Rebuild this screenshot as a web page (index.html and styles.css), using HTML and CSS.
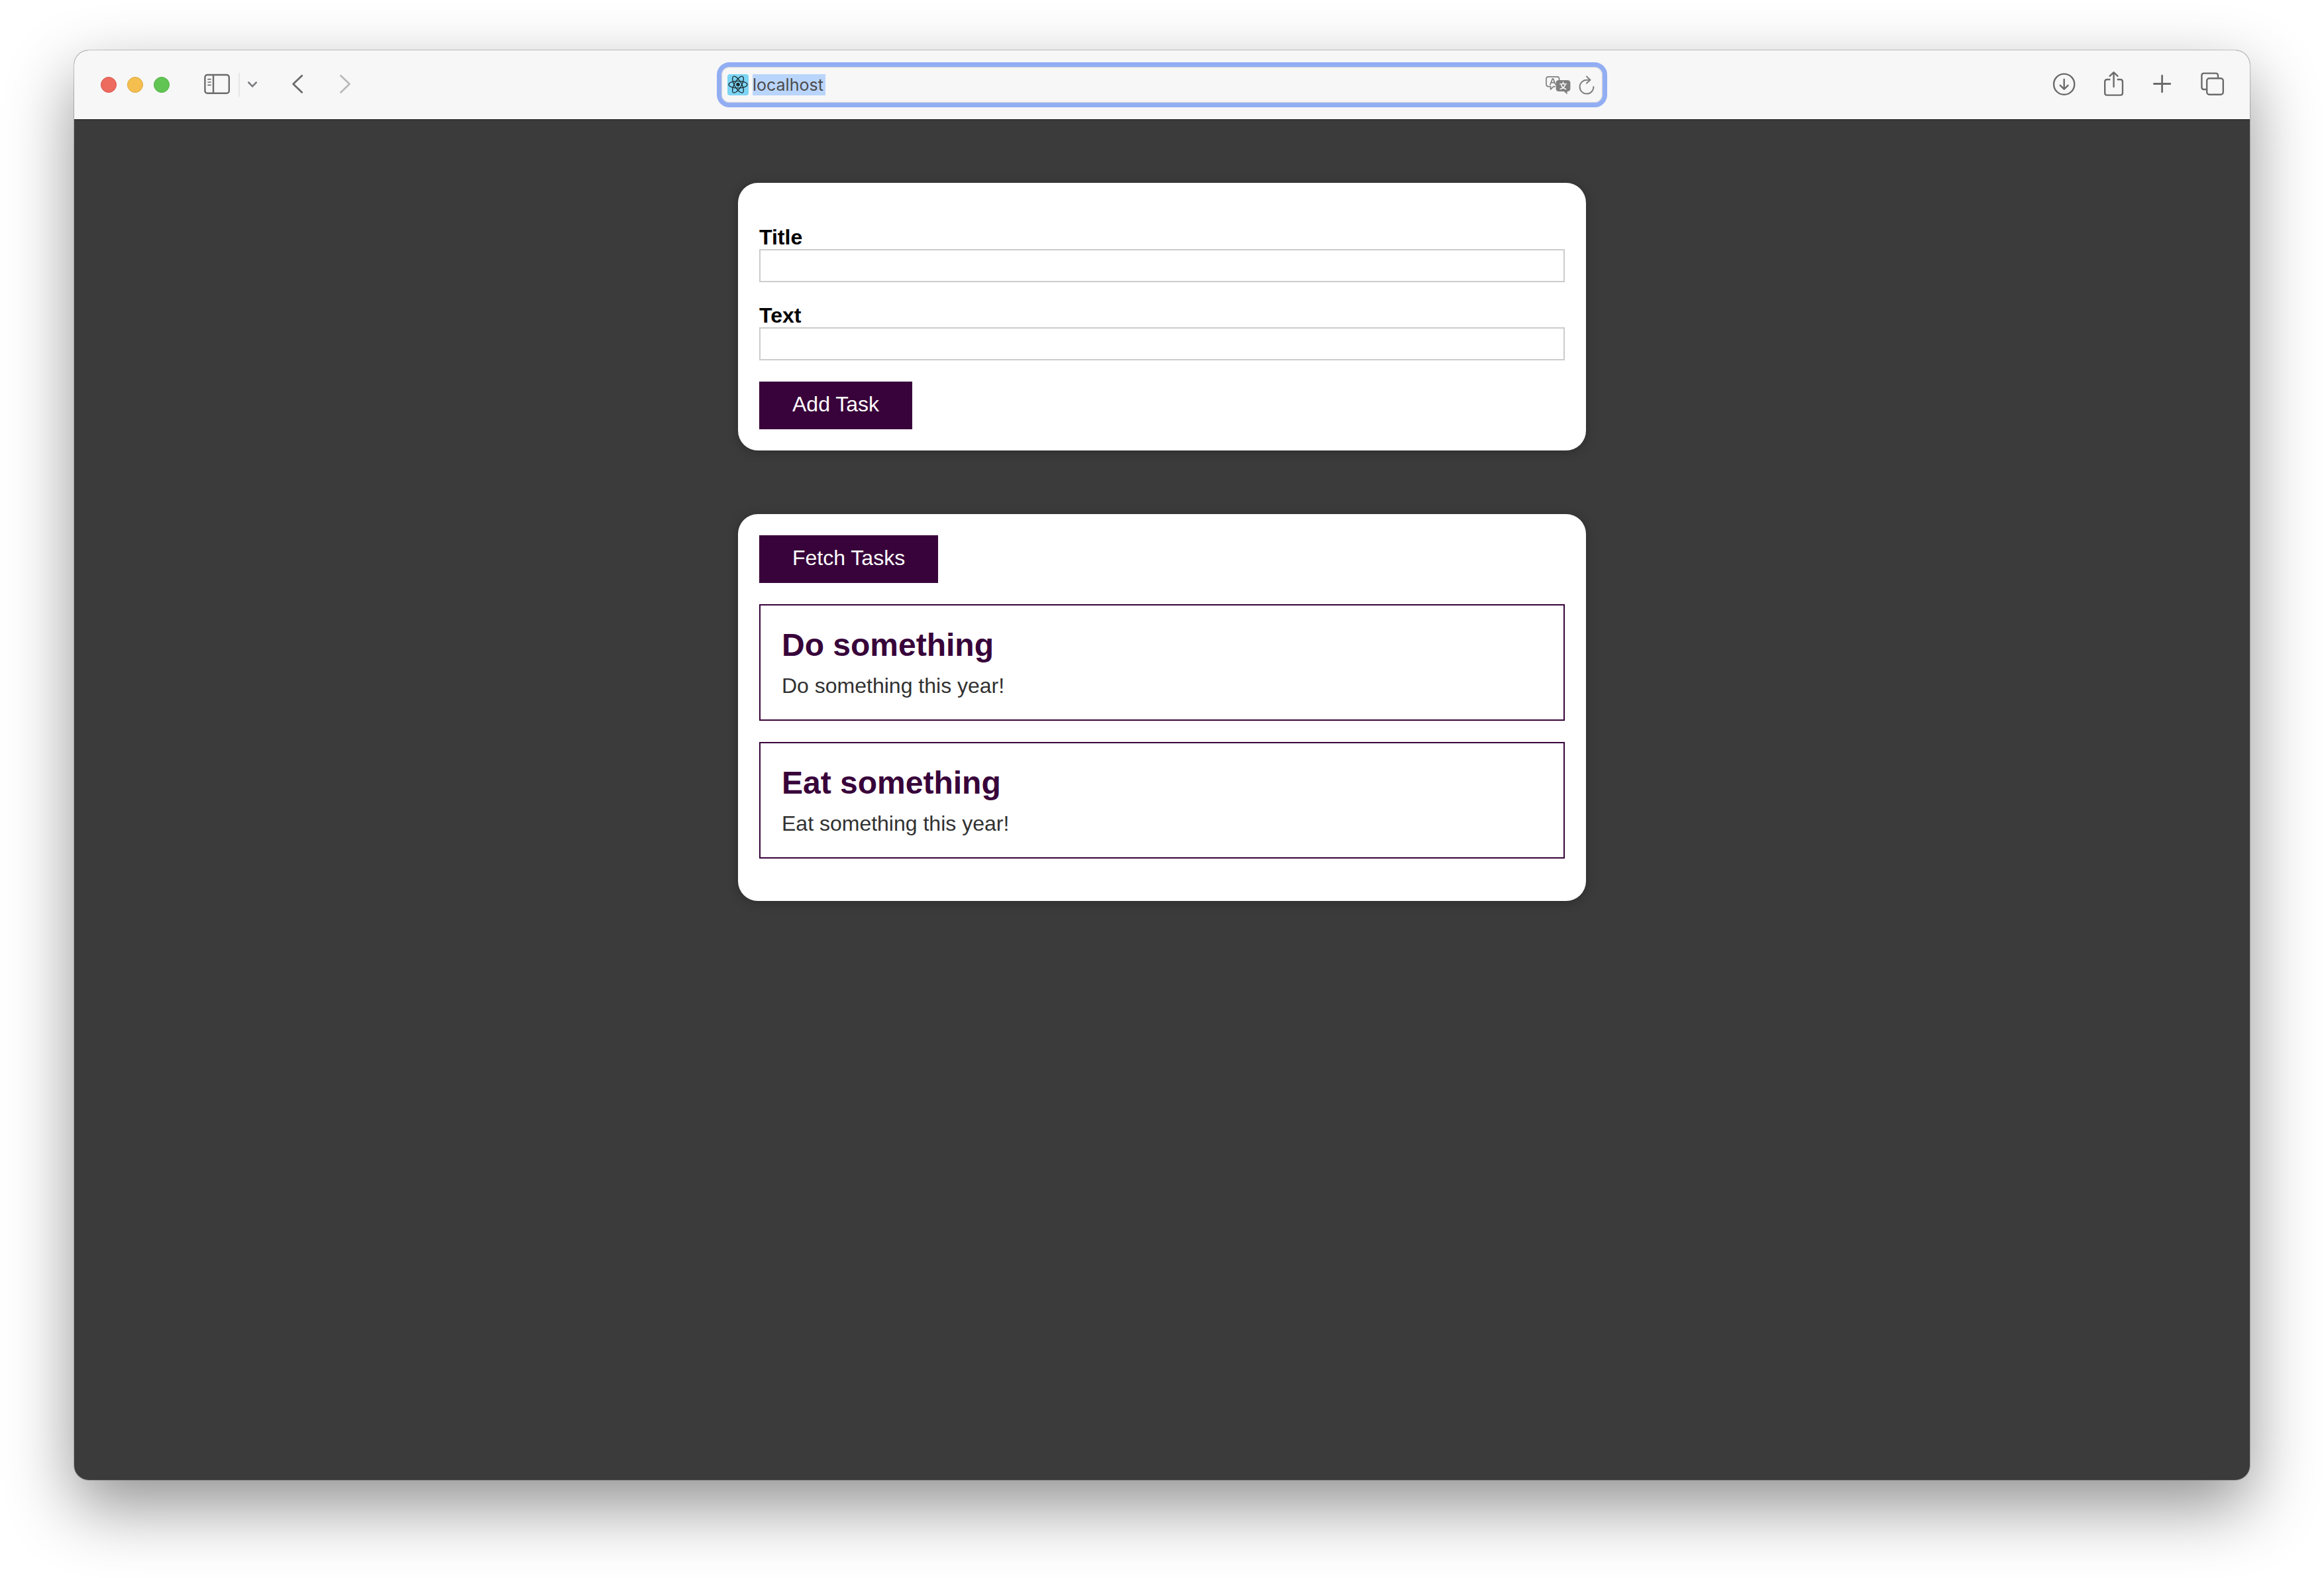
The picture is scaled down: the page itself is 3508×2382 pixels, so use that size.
FILE: index.html
```html
<!DOCTYPE html>
<html lang="en">
<head>
  <meta charset="utf-8">
  <meta name="viewport" content="width=device-width, initial-scale=1">
  <title>Tasks</title>
  <link rel="stylesheet" href="styles.css">
</head>
<body>
  <div class="window">
    <header class="toolbar">
      <div class="toolbar-start">
        <div class="lights">
          <button class="light light-close" type="button" aria-label="Close"></button>
          <button class="light light-minimize" type="button" aria-label="Minimize"></button>
          <button class="light light-zoom" type="button" aria-label="Zoom"></button>
        </div>
        <div class="sidebar-tools">
          <button class="icon-button" type="button" aria-label="Show sidebar">
            <svg width="40" height="44" viewBox="0 0 40 44" fill="none" stroke="#6b6b6b" stroke-width="2.4" stroke-linecap="round">
              <rect x="1.4" y="7" width="36.4" height="27.8" rx="3.6"/>
              <path d="M14 7v27.8" stroke-linecap="butt"/>
              <path d="M6 13.7h4M6 18h4M6 22.4h4" stroke-width="1.7"/>
            </svg>
          </button>
          <span class="divider"></span>
          <button class="icon-button" type="button" aria-label="Tab groups">
            <svg width="14" height="44" viewBox="1 0 14 44" fill="none" stroke="#7d7d82" stroke-width="2.8" stroke-linecap="round" stroke-linejoin="round">
              <path d="M2.4 18.6l5.6 5.8 5.6-5.8"/>
            </svg>
          </button>
        </div>
        <div class="history">
          <button class="icon-button" type="button" aria-label="Back">
            <svg width="18" height="44" viewBox="0 0 18 44" fill="none" stroke="#6b6b6b" stroke-width="2.8" stroke-linecap="round" stroke-linejoin="round">
              <path d="M15.8 8.2L2.6 20.8l13.2 12.6"/>
            </svg>
          </button>
          <button class="icon-button" type="button" aria-label="Forward">
            <svg width="18" height="44" viewBox="0 0 18 44" fill="none" stroke="#b9b9b9" stroke-width="2.8" stroke-linecap="round" stroke-linejoin="round">
              <path d="M2.4 8.2l13.2 12.6L2.4 33.4"/>
            </svg>
          </button>
        </div>
      </div>

      <div class="address">
        <svg class="favicon" width="32" height="32" viewBox="0 0 32 32" fill="none" stroke="#1c2a30" stroke-width="1.3" aria-hidden="true">
          <rect width="32" height="32" rx="4" fill="#7dd5f5" stroke="none"/>
          <ellipse cx="16" cy="15.6" rx="14" ry="5.3"/>
          <ellipse cx="16" cy="15.6" rx="14" ry="5.3" transform="rotate(60 16 15.6)"/>
          <ellipse cx="16" cy="15.6" rx="14" ry="5.3" transform="rotate(120 16 15.6)"/>
          <circle cx="16" cy="15.6" r="2.8" fill="#1c2a30" stroke="none"/>
        </svg>
        <input class="address-input" type="text" value="localhost" aria-label="Address">
        <div class="address-tools">
          <button class="icon-button" type="button" aria-label="Translate">
            <svg width="40" height="32" viewBox="0 0 40 32" fill="none" stroke="#7f7f7f" stroke-width="1.7" stroke-linecap="round" stroke-linejoin="round">
              <path d="M15 18.600h-2L8.600 23v-4.400H5.600q-3.600 0-3.600-3.600V7.400q0-3.600 3.600-3.600h12.400q3.600 0 3.600 3.600v1"/>
              <path d="M8 15.600l3.500-8.800h1l3.500 8.800M9.400 12.600h5.200"/>
              <path d="M21 9h13q4.400 0 4.400 4.400v8.200q0 4.400-4.400 4.400h-.4v4.400L28.800 26H21q-4.400 0-4.400-4.400v-8.200Q16.600 9 21 9z" fill="#7f7f7f" stroke="none"/>
              <path d="M27.600 11.800v2.200M22.800 14.800h9.600M24.600 16.400q2 4.600 7 6.200M30.600 16.400q-2 4.600-7.400 6.200" stroke="#f7f7f7" stroke-width="1.6"/>
            </svg>
          </button>
          <button class="icon-button" type="button" aria-label="Reload">
            <svg width="26" height="32" viewBox="0 0 26 32" fill="none" stroke="#7f7f7f" stroke-width="2" stroke-linecap="round" stroke-linejoin="round">
              <path d="M17 8.800H13A10.400 10.400 0 1 0 23.400 19"/>
              <path d="M13 3.400l5.400 5.400-5.400 4.800"/>
            </svg>
          </button>
        </div>
      </div>

      <div class="toolbar-end">
        <button class="icon-button" type="button" aria-label="Downloads">
          <svg width="36" height="44" viewBox="0 0 36 44" fill="none" stroke="#6b6b6b" stroke-width="2.4" stroke-linecap="round" stroke-linejoin="round">
            <circle cx="17.7" cy="21.2" r="15.6"/>
            <path d="M17.700 13.800v14.600M11.800 22.800l5.900 5.800 5.900-5.800"/>
          </svg>
        </button>
        <button class="icon-button" type="button" aria-label="Share">
          <svg width="34" height="44" viewBox="0 0 34 44" fill="none" stroke="#6b6b6b" stroke-width="2.4" stroke-linecap="round" stroke-linejoin="round">
            <path d="M11.400 14H6.600q-3.400 0-3.400 3.400v16.800q0 3.400 3.400 3.400h20q3.400 0 3.400-3.400V17.400q0-3.400-3.400-3.400h-4.800" stroke-linecap="butt"/>
            <path d="M16.600 25V4M10.600 8.800l6-5.600 6 5.600"/>
          </svg>
        </button>
        <button class="icon-button" type="button" aria-label="New tab">
          <svg width="32" height="44" viewBox="0 0 32 44" fill="none" stroke="#6b6b6b" stroke-width="2.8" stroke-linecap="round">
            <path d="M15.600 8.200v24.600M3.400 20.500h24.400"/>
          </svg>
        </button>
        <button class="icon-button" type="button" aria-label="Tab overview">
          <svg width="38" height="44" viewBox="0 0 38 44" fill="none" stroke="#6b6b6b" stroke-width="2.4">
            <rect x="11.200" y="12.200" width="24.600" height="24.600" rx="3.600"/>
            <path d="M11.200 29H6.800q-3.400 0-3.400-3.400V8q0-3.400 3.400-3.400h17.800q3.400 0 3.400 3.400v4.200"/>
          </svg>
        </button>
      </div>
    </header>

    <main class="viewport">
      <section class="card">
        <form class="task-form">
          <div class="field">
            <label for="title">Title</label>
            <input id="title" type="text">
          </div>
          <div class="field">
            <label for="text">Text</label>
            <input id="text" type="text">
          </div>
          <button class="action" type="button">Add Task</button>
        </form>
      </section>

      <section class="card">
        <button class="action" type="button">Fetch Tasks</button>
        <ul class="tasks">
          <li class="task">
            <h2>Do something</h2>
            <p>Do something this year!</p>
          </li>
          <li class="task">
            <h2>Eat something</h2>
            <p>Eat something this year!</p>
          </li>
        </ul>
      </section>
    </main>
  </div>
</body>
</html>
```
FILE: styles.css
```css
* {
  box-sizing: border-box;
}

body {
  display: flex;
  min-height: 100vh;
  margin: 0;
  padding: 76px 112px 148px;
  background: #fff;
  font-family: "Liberation Sans", Arial, sans-serif;
  font-size: 32px;
}

button {
  font: inherit;
  cursor: pointer;
}

/* Browser window */

.window {
  display: flex;
  flex: 1;
  flex-direction: column;
  min-width: 0;
  overflow: hidden;
  border-radius: 22px;
  background: #3b3b3b;
  box-shadow: 0 0 0 1px rgba(0, 0, 0, 0.2), 0 40px 100px rgba(0, 0, 0, 0.43);
}

.toolbar {
  display: grid;
  grid-template-columns: 1fr minmax(0, 1344px) 1fr;
  align-items: center;
  height: 104px;
  background: #f7f7f7;
}

.toolbar-start,
.toolbar-end,
.lights,
.sidebar-tools,
.history,
.address,
.address-tools {
  display: flex;
  align-items: center;
}

.toolbar-start {
  gap: 52px;
  padding-left: 40px;
}

.toolbar-end {
  justify-content: flex-end;
  gap: 40px;
  padding-right: 38px;
}

.lights {
  gap: 16px;
}

.light {
  width: 24px;
  height: 24px;
  padding: 0;
  border: 1px solid;
  border-radius: 50%;
}

.light-close {
  border-color: #d9564b;
  background: #ec6a5e;
}

.light-minimize {
  border-color: #dba53f;
  background: #f5bf4f;
}

.light-zoom {
  border-color: #52ad43;
  background: #61c554;
}

.sidebar-tools {
  gap: 12px;
}

.divider {
  width: 2px;
  height: 36px;
  background: #e6e6e6;
}

.history {
  gap: 54px;
}

.icon-button {
  display: flex;
  padding: 0;
  border: 0;
  background: none;
}

.address {
  gap: 6px;
  height: 68px;
  padding: 0 11px 0 9px;
  border: 7px solid #92aef3;
  border-radius: 19px;
  background: #f7f7f7;
  box-shadow: inset 0 0 1px 1px #d2d2d6;
}

.address-input {
  width: 110px;
  height: 32px;
  padding: 0;
  border: 0;
  outline: 0;
  background: #bad5fc;
  color: #4c4c4c;
  font-family: Inter, sans-serif;
  font-size: 25px;
  line-height: 32px;
}

.address-tools {
  gap: 10px;
  margin-left: auto;
}

/* Page content */

.viewport {
  display: flex;
  flex: 1;
  flex-direction: column;
  align-items: center;
  gap: 96px;
  padding: 96px 32px;
  box-shadow: inset 0 1px 0 #141414;
}

.card {
  width: 100%;
  max-width: 1280px;
  padding: 32px;
  border-radius: 30px;
  background: #fff;
  box-shadow: 0 2px 16px rgba(0, 0, 0, 0.25);
}

.task-form {
  padding-top: 32px;
}

.field {
  display: flex;
  flex-direction: column;
  margin-bottom: 32px;
}

.field label {
  color: #000;
  font-weight: bold;
  line-height: 36px;
}

.field input {
  width: 100%;
  height: 50px;
  padding: 4px;
  border: 2px solid #ccc;
  border-radius: 0;
  outline: 0;
  background: #fff;
  font: inherit;
}

.action {
  display: block;
  height: 72px;
  padding: 0 48px 4px;
  border: 2px solid #38033a;
  background: #38033a;
  color: #fff;
  line-height: 64px;
}

.tasks {
  display: flex;
  flex-direction: column;
  gap: 32px;
  margin: 32px 0;
  padding: 0;
  list-style: none;
}

.task {
  padding: 32px;
  border: 2px solid #38033a;
}

.task h2 {
  margin: 0 0 16px;
  color: #38033a;
  font-size: 48px;
  line-height: 55px;
}

.task p {
  margin: 0;
  color: #313131;
  line-height: 37px;
}
```
